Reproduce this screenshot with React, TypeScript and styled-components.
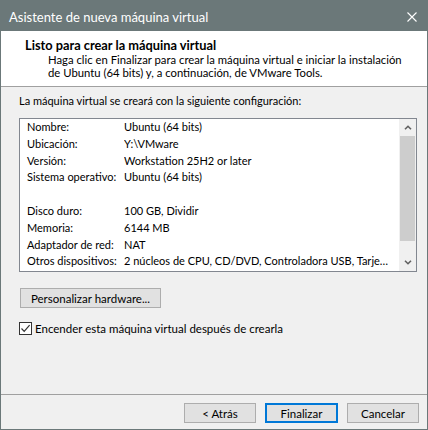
import React from "react";
import styled, { createGlobalStyle } from "styled-components";

const GlobalStyle = createGlobalStyle`
  html, body {
    margin: 0;
    padding: 0;
    background: #f0f0f0;
  }
  body {
    font-family: Lato, "Liberation Sans", sans-serif;
    font-size: 11px;
    color: #000;
  }
`;

const WindowEl = styled.div`
  width: 428px;
  height: 430px;
  box-sizing: border-box;
  border: 1px solid #6b7879;
  border-top: none;
  background: #f0f0f0;
  display: flex;
  flex-direction: column;
  overflow: hidden;
`;

const TitleBar = styled.div`
  flex: none;
  height: 31px;
  background: #6b7879;
  color: #fff;
  display: flex;
  align-items: center;
  justify-content: space-between;
  padding: 2px 10px 0 8px;
  box-sizing: border-box;
  font-size: 13px;
`;

const CloseIcon = styled.svg`
  width: 10px;
  height: 10px;
`;

const HeaderEl = styled.div`
  flex: none;
  height: 56px;
  box-sizing: border-box;
  background: #fff;
  border-bottom: 1px solid #a0a0a0;
  padding: 6px 0 0 24px;
`;

const HeaderTitle = styled.div`
  font-weight: bold;
  font-size: 12.8px;
  line-height: 16px;
`;

const HeaderText = styled.div`
  padding-left: 23px;
  font-size: 11.3px;
  line-height: 13px;
`;

const Body = styled.div`
  flex: 1;
  padding: 6px 10px 0 18px;
  display: flex;
  flex-direction: column;
`;

const Intro = styled.div`
  line-height: 15px;
`;

const ListBox = styled.div`
  margin-top: 10px;
  height: 154px;
  box-sizing: border-box;
  border: 1px solid #828790;
  background: #fff;
  display: flex;
`;

const ListContent = styled.div`
  flex: 1;
  padding: 0 0 0 7px;
  overflow: hidden;
`;

const Row = styled.div`
  display: flex;
  height: 16.8px;
  line-height: 16.8px;
  white-space: nowrap;
`;

const Label = styled.div`
  flex: none;
  width: 97px;
`;

const Value = styled.div`
  flex: 1;
  overflow: hidden;
`;

const ScrollBar = styled.div`
  flex: none;
  width: 17px;
  background: #f0f0f0;
  display: flex;
  flex-direction: column;
`;

const ScrollArrow = styled.div`
  height: 17px;
  display: flex;
  align-items: center;
  justify-content: center;
`;

const Thumb = styled.div`
  height: 105px;
  margin: 0 1px;
  background: #cdcdcd;
`;

const Track = styled.div`
  flex: 1;
`;

const Button = styled.button<{ $primary?: boolean }>`
  box-sizing: border-box;
  height: 20px;
  width: ${(p) => (p.$primary ? 73 : 72)}px;
  padding: 0;
  background: #e1e1e1;
  border: ${(p) => (p.$primary ? "2px solid #0078d7" : "1px solid #adadad")};
  font-family: inherit;
  font-size: 11.5px;
  color: #000;
`;

const HardwareButton = styled(Button)`
  width: 141px;
  margin: 16px 0 0 1px;
  align-self: flex-start;
`;

const CheckRow = styled.label`
  margin-top: 13px;
  display: flex;
  align-items: center;
  gap: 3px;
  line-height: 15px;
  font-size: 11.5px;
`;

const CheckBox = styled.span`
  box-sizing: border-box;
  width: 13px;
  height: 13px;
  border: 1px solid #333;
  background: #fff;
  display: flex;
  align-items: center;
  justify-content: center;
`;

const Footer = styled.div`
  flex: none;
  border-top: 1px solid #a0a0a0;
  padding: 8px 8px 6px 0;
  display: flex;
  justify-content: flex-end;
  gap: 9px;
`;

const Chevron = ({ up }: { up?: boolean }) => (
  <svg width="8" height="5" viewBox="0 0 8 5">
    <path
      d={up ? "M1 4.3 L4 1.3 L7 4.3" : "M1 0.7 L4 3.7 L7 0.7"}
      fill="none"
      stroke="#606060"
      strokeWidth="1.6"
    />
  </svg>
);

const rows: [string, string][] = [
  ["Nombre:", "Ubuntu (64 bits)"],
  ["Ubicación:", "Y:\\VMware"],
  ["Versión:", "Workstation 25H2 or later"],
  ["Sistema operativo:", "Ubuntu (64 bits)"],
  ["", ""],
  ["Disco duro:", "100 GB, Dividir"],
  ["Memoria:", "6144 MB"],
  ["Adaptador de red:", "NAT"],
  ["Otros dispositivos:", "2 núcleos de CPU, CD/DVD, Controladora USB, Tarje…"],
];

export default function App() {
  return (
    <>
      <GlobalStyle />
      <WindowEl>
        <TitleBar>
          <span>Asistente de nueva máquina virtual</span>
          <CloseIcon viewBox="0 0 10 10">
            <path d="M0.5 0.5 L9.5 9.5 M9.5 0.5 L0.5 9.5" stroke="#fff" strokeWidth="1.1" />
          </CloseIcon>
        </TitleBar>
        <HeaderEl>
          <HeaderTitle>Listo para crear la máquina virtual</HeaderTitle>
          <HeaderText>
            Haga clic en Finalizar para crear la máquina virtual e iniciar la instalación
            <br />
            de Ubuntu (64 bits) y, a continuación, de VMware Tools.
          </HeaderText>
        </HeaderEl>
        <Body>
          <Intro>La máquina virtual se creará con la siguiente configuración:</Intro>
          <ListBox>
            <ListContent>
              {rows.map(([label, value], i) => (
                <Row key={i}>
                  <Label>{label}</Label>
                  <Value>{value}</Value>
                </Row>
              ))}
            </ListContent>
            <ScrollBar>
              <ScrollArrow>
                <Chevron up />
              </ScrollArrow>
              <Thumb />
              <Track />
              <ScrollArrow>
                <Chevron />
              </ScrollArrow>
            </ScrollBar>
          </ListBox>
          <HardwareButton>Personalizar hardware...</HardwareButton>
          <CheckRow>
            <CheckBox>
              <svg width="11" height="11" viewBox="0 0 11 11">
                <path d="M1.5 5.5 L4.2 8.3 L9.6 2.2" fill="none" stroke="#333" strokeWidth="1.2" />
              </svg>
            </CheckBox>
            Encender esta máquina virtual después de crearla
          </CheckRow>
        </Body>
        <Footer>
          <Button>&lt; Atrás</Button>
          <Button $primary>Finalizar</Button>
          <Button>Cancelar</Button>
        </Footer>
      </WindowEl>
    </>
  );
}
